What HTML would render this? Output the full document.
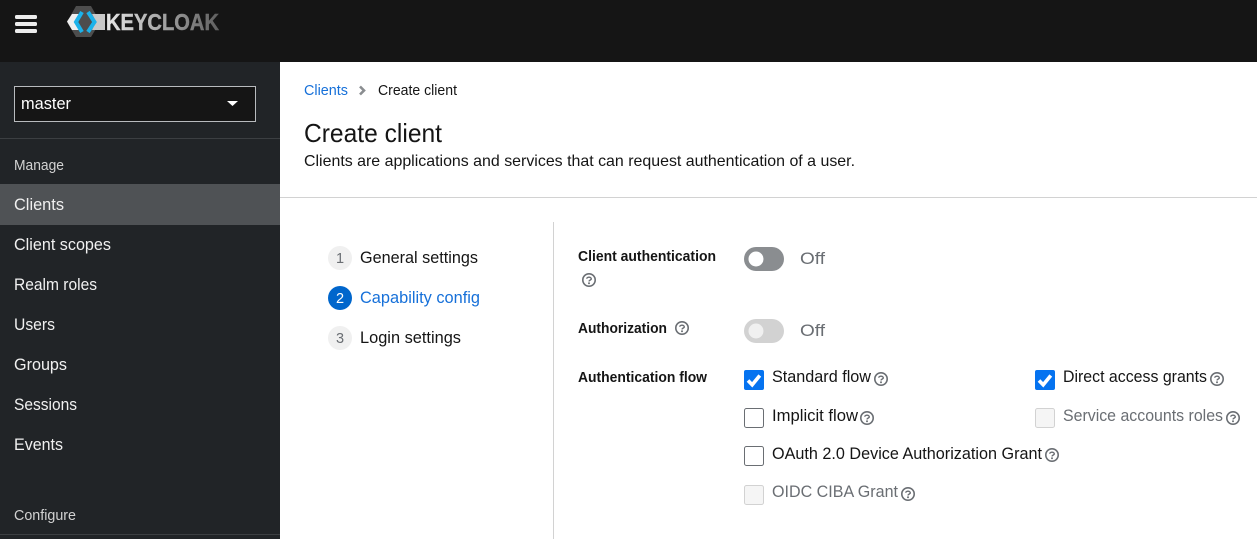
<!DOCTYPE html>
<html lang="en">
<head>
<meta charset="utf-8">
<title>Create client</title>
<style>
html,body{margin:0;padding:0;background:#fff;width:1257px;height:539px;overflow:hidden}
svg{display:block}
text{font-family:"Liberation Sans",sans-serif}
</style>
</head>
<body>
<svg xmlns="http://www.w3.org/2000/svg" width="1257" height="539" viewBox="0 0 1257 539">
<defs>
<linearGradient id="kc" x1="0" x2="1" y1="0" y2="0"><stop offset="0" stop-color="#e8e8e8"/><stop offset="1" stop-color="#5f5f5f"/></linearGradient>
<g id="h" fill="none">
<circle r="6.200" stroke="#6a6e73" stroke-width="1.600"/>
<path d="M-2.300-1.300C-2.200-3.300 2.400-3.300 2.300-1C2.200 0 .1 0 0 1.400" stroke="#6a6e73" stroke-width="1.400"/>
<circle cy="3.200" r="1" fill="#6a6e73"/>
</g>
<g id="chk">
<rect width="20" height="20" rx="2" fill="#0573f0"/>
<path d="M4 10.500L8.200 14.800L15.800 5.500" fill="none" stroke="#fff" stroke-width="3.600"/>
</g>
<rect id="box" width="19" height="19" x=".5" y=".5" rx="2" fill="#fff" stroke="#6a6e73"/>
<rect id="dis" width="19" height="19" x=".5" y=".5" rx="2" fill="#f5f5f5" stroke="#d2d2d2"/>
</defs>

<rect width="1257" height="62" fill="#151515"/>
<rect y="62" width="280" height="477" fill="#212427"/>
<rect x="15" y="15" width="22" height="4" rx="1.500" fill="#ececec"/>
<rect x="15" y="22" width="22" height="4" rx="1.500" fill="#ececec"/>
<rect x="15" y="29" width="22" height="4" rx="1.500" fill="#ececec"/>

<path d="M76 6H91L100 22L91 37H76L67 22Z" fill="#4d4d4d"/>
<path d="M67 21.500L72 14H80L76 21.500L80 30H72Z" fill="#efefef"/>
<path d="M92 14H105V30H92L96 21.500Z" fill="#c9c9c9"/>
<path d="M82 12L76 22L82 32" fill="none" stroke="#1cb2ea" stroke-width="4"/>
<path d="M88 12L94.500 22L88 32" fill="none" stroke="#1cb2ea" stroke-width="4"/>
<text x="106" y="30" font-size="23" font-weight="700" fill="url(#kc)" stroke="url(#kc)" stroke-width=".4" textLength="113" lengthAdjust="spacingAndGlyphs">KEYCLOAK</text>

<rect x="14.500" y="86.500" width="241" height="35" fill="#151515" stroke="#b8bbbe"/>
<text x="21" y="109" font-size="16.500" fill="#fff" textLength="50" lengthAdjust="spacingAndGlyphs">master</text>
<path d="M227 101H238L232.500 106Z" fill="#fff"/>
<rect y="138" width="280" height="1" fill="#3c3f42"/>
<text x="14" y="170" font-size="14.500" fill="#d2d2d2" textLength="50" lengthAdjust="spacingAndGlyphs">Manage</text>
<rect y="184" width="280" height="41" fill="#4f5255"/>
<g font-size="16.500" fill="#f0f0f0">
<text x="14" y="210" textLength="50" lengthAdjust="spacingAndGlyphs">Clients</text>
<text x="14" y="250" textLength="97" lengthAdjust="spacingAndGlyphs">Client scopes</text>
<text x="14" y="290" textLength="83" lengthAdjust="spacingAndGlyphs">Realm roles</text>
<text x="14" y="330" textLength="41" lengthAdjust="spacingAndGlyphs">Users</text>
<text x="14" y="370" textLength="53" lengthAdjust="spacingAndGlyphs">Groups</text>
<text x="14" y="410" textLength="63" lengthAdjust="spacingAndGlyphs">Sessions</text>
<text x="14" y="450" textLength="49" lengthAdjust="spacingAndGlyphs">Events</text>
</g>
<text x="14" y="520" font-size="14.500" fill="#d2d2d2" textLength="62" lengthAdjust="spacingAndGlyphs">Configure</text>
<rect y="534" width="280" height="1" fill="#3c3f42"/>

<text x="304" y="95" font-size="14.500" fill="#1670d9" textLength="44" lengthAdjust="spacingAndGlyphs">Clients</text>
<path d="M360 86.500L364 90.500L360 94.500" fill="none" stroke="#8a8d90" stroke-width="2.600"/>
<text x="378" y="95" font-size="14.500" fill="#151515" textLength="79" lengthAdjust="spacingAndGlyphs">Create client</text>
<text x="304" y="142" font-size="26" fill="#151515" textLength="138" lengthAdjust="spacingAndGlyphs">Create client</text>
<text x="304" y="166" font-size="16" fill="#151515" textLength="551" lengthAdjust="spacingAndGlyphs">Clients are applications and services that can request authentication of a user.</text>
<rect x="280" y="197" width="977" height="1" fill="#d2d2d2"/>
<rect x="553" y="222" width="1" height="317" fill="#d2d2d2"/>

<circle cx="340" cy="258" r="12" fill="#f0f0f0"/>
<text x="340" y="263" font-size="14.500" fill="#6a6e73" text-anchor="middle">1</text>
<text x="360" y="263" font-size="16.500" fill="#151515" textLength="118" lengthAdjust="spacingAndGlyphs">General settings</text>
<circle cx="340" cy="298" r="12" fill="#06c"/>
<text x="340" y="303" font-size="14.500" fill="#fff" text-anchor="middle">2</text>
<text x="360" y="303" font-size="16.500" fill="#1670d9" textLength="120" lengthAdjust="spacingAndGlyphs">Capability config</text>
<circle cx="340" cy="338" r="12" fill="#f0f0f0"/>
<text x="340" y="343" font-size="14.500" fill="#6a6e73" text-anchor="middle">3</text>
<text x="360" y="343" font-size="16.500" fill="#151515" textLength="101" lengthAdjust="spacingAndGlyphs">Login settings</text>

<g font-size="14.500" font-weight="700" fill="#151515">
<text x="578" y="261" textLength="138" lengthAdjust="spacingAndGlyphs">Client authentication</text>
<text x="578" y="333" textLength="89" lengthAdjust="spacingAndGlyphs">Authorization</text>
<text x="578" y="382" textLength="129" lengthAdjust="spacingAndGlyphs">Authentication flow</text>
</g>
<use href="#h" x="589" y="280"/>
<use href="#h" x="682" y="328"/>

<rect x="744" y="247" width="40" height="24" rx="12" fill="#8a8d90"/>
<circle cx="756" cy="259" r="7.500" fill="#fff"/>
<text x="800" y="264" font-size="17" fill="#6a6e73" textLength="25" lengthAdjust="spacingAndGlyphs">Off</text>
<rect x="744" y="319" width="40" height="24" rx="12" fill="#d2d2d2"/>
<circle cx="756" cy="331" r="7.500" fill="#f0f0f0"/>
<text x="800" y="336" font-size="17" fill="#6a6e73" textLength="25" lengthAdjust="spacingAndGlyphs">Off</text>

<use href="#chk" x="744" y="370"/>
<use href="#box" x="744" y="408"/>
<use href="#box" x="744" y="446"/>
<use href="#dis" x="744" y="485"/>
<use href="#chk" x="1035" y="370"/>
<use href="#dis" x="1035" y="408"/>

<g font-size="16.500" fill="#151515">
<text x="772" y="382" textLength="99" lengthAdjust="spacingAndGlyphs">Standard flow</text>
<text x="772" y="421" textLength="86" lengthAdjust="spacingAndGlyphs">Implicit flow</text>
<text x="772" y="459" textLength="270" lengthAdjust="spacingAndGlyphs">OAuth 2.0 Device Authorization Grant</text>
<text x="1063" y="382" textLength="144" lengthAdjust="spacingAndGlyphs">Direct access grants</text>
</g>
<g font-size="16.500" fill="#6a6e73">
<text x="772" y="497" textLength="126" lengthAdjust="spacingAndGlyphs">OIDC CIBA Grant</text>
<text x="1063" y="421" textLength="160" lengthAdjust="spacingAndGlyphs">Service accounts roles</text>
</g>
<use href="#h" x="881" y="379"/>
<use href="#h" x="867" y="418"/>
<use href="#h" x="1052" y="455"/>
<use href="#h" x="908" y="494"/>
<use href="#h" x="1217" y="379"/>
<use href="#h" x="1233" y="418"/>
</svg>
</body>
</html>
